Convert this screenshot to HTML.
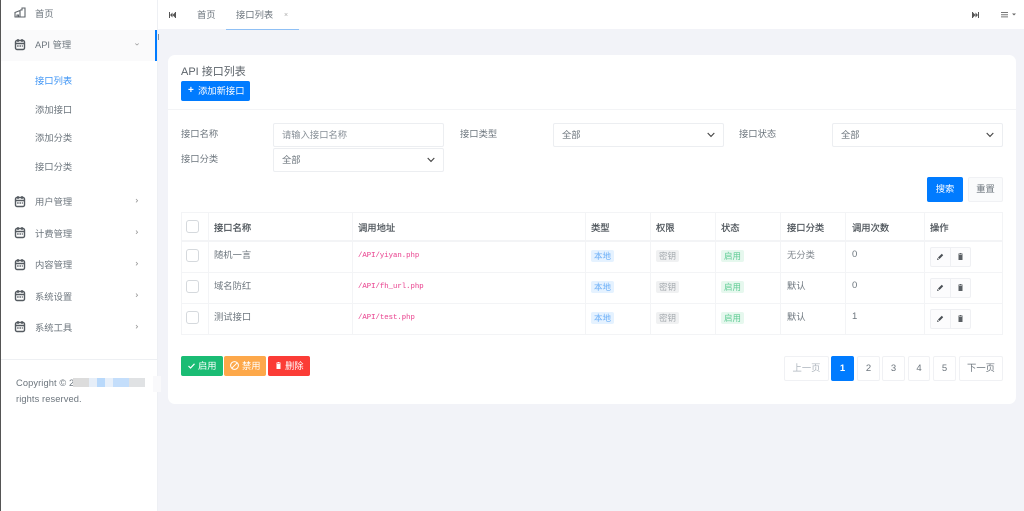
<!DOCTYPE html>
<html><head><meta charset="utf-8">
<style>
*{box-sizing:border-box}
html,body{margin:0;padding:0;width:1024px;height:511px;overflow:hidden;background:#f2f3f8}
#r{position:relative;width:1024px;height:511px;overflow:hidden;background:#f2f3f8;font-family:"Liberation Sans","Noto Sans CJK SC",sans-serif;font-size:9.3px;color:#6c757d;filter:blur(.3px)}
.a{position:absolute;white-space:nowrap}
.t{position:absolute;white-space:nowrap;line-height:12px}
.b{position:absolute;border:1px solid #eff0f3;background:#fff;border-radius:2px}
.sel{position:absolute;border:1px solid #eceef1;background:#fff;border-radius:2px;height:24px;line-height:22px;padding-left:8px;color:#6c757d;width:171px}
.v{position:absolute;background:#f3f4f6;width:1px}
.h{position:absolute;background:#f3f4f6;height:1px}
.tag{position:absolute;width:23px;height:12px;border-radius:2px;font-size:8.5px;line-height:12px;text-align:center}
.ck{position:absolute;left:186px;width:13px;height:13px;border:1px solid #d5d9dd;border-radius:3px;background:#fff}
.code{position:absolute;left:358px;font:7.3px/12px "Liberation Mono",monospace;color:#e83e8c;opacity:.9;-webkit-text-stroke:.1px #e83e8c}
.th{color:#4a5157;-webkit-text-stroke:.2px #4a5157}
.pg{position:absolute;top:356px;height:25px;border:1px solid #f0f1f4;border-radius:2px;background:#fff;text-align:center;line-height:23px;color:#6c757d;font-size:9.5px}
svg{position:absolute;overflow:visible}
</style></head><body><div id="r">
<div class="a" style="left:0;top:0;width:158px;height:511px;background:#fff;border-left:1px solid #555;border-right:1px solid #eef0f4"></div>
<div class="a" style="left:1px;top:30px;width:155px;height:31px;background:#fafafb"></div>
<div class="a" style="left:155px;top:30px;width:2px;height:31px;background:#007bff"></div>
<div class="a" style="left:158px;top:34px;width:1px;height:6px;background:#8a8f96"></div>

<svg style="left:14px;top:7px" width="12" height="11" viewBox="0 0 12 11" fill="none" stroke="#5d6369" stroke-width="1.1"><path d="M1 10V5.5L6 3.5V10M.5 10H11.5M6 3H8V1H11V10M3 10V8H4.5V10"/></svg>
<div class="t" style="left:35px;top:8px">首页</div>
<svg style="left:15px;top:39px" width="10" height="11" viewBox="0 0 10 11" fill="none" stroke="#555b61" stroke-width="1.4"><rect x=".5" y="1.5" width="9" height="9" rx="1.5"/><path d="M3 0V3M7 0V3M.5 4.5H9.5"/><path d="M2.2 7H7.8" stroke-dasharray="1.4 .9"/></svg>
<div class="t" style="left:35px;top:39px">API 管理</div>
<div class="t" style="left:35px;top:75px;color:#3f95f5">接口列表</div>
<div class="t" style="left:35px;top:104px">添加接口</div>
<div class="t" style="left:35px;top:132px">添加分类</div>
<div class="t" style="left:35px;top:161px">接口分类</div>

<svg style="left:15px;top:196px" width="10" height="11" viewBox="0 0 10 11" fill="none" stroke="#555b61" stroke-width="1.4"><rect x=".5" y="1.5" width="9" height="9" rx="1.5"/><path d="M3 0V3M7 0V3M.5 4.5H9.5"/><path d="M2.2 7H7.8" stroke-dasharray="1.4 .9"/></svg>
<div class="t" style="left:35px;top:196px">用户管理</div>
<svg style="left:15px;top:227px" width="10" height="11" viewBox="0 0 10 11" fill="none" stroke="#555b61" stroke-width="1.4"><rect x=".5" y="1.5" width="9" height="9" rx="1.5"/><path d="M3 0V3M7 0V3M.5 4.5H9.5"/><path d="M2.2 7H7.8" stroke-dasharray="1.4 .9"/></svg>
<div class="t" style="left:35px;top:228px">计费管理</div>
<svg style="left:15px;top:259px" width="10" height="11" viewBox="0 0 10 11" fill="none" stroke="#555b61" stroke-width="1.4"><rect x=".5" y="1.5" width="9" height="9" rx="1.5"/><path d="M3 0V3M7 0V3M.5 4.5H9.5"/><path d="M2.2 7H7.8" stroke-dasharray="1.4 .9"/></svg>
<div class="t" style="left:35px;top:259px">内容管理</div>
<svg style="left:15px;top:290px" width="10" height="11" viewBox="0 0 10 11" fill="none" stroke="#555b61" stroke-width="1.4"><rect x=".5" y="1.5" width="9" height="9" rx="1.5"/><path d="M3 0V3M7 0V3M.5 4.5H9.5"/><path d="M2.2 7H7.8" stroke-dasharray="1.4 .9"/></svg>
<div class="t" style="left:35px;top:291px">系统设置</div>
<svg style="left:15px;top:321px" width="10" height="11" viewBox="0 0 10 11" fill="none" stroke="#555b61" stroke-width="1.4"><rect x=".5" y="1.5" width="9" height="9" rx="1.5"/><path d="M3 0V3M7 0V3M.5 4.5H9.5"/><path d="M2.2 7H7.8" stroke-dasharray="1.4 .9"/></svg>
<div class="t" style="left:35px;top:322px">系统工具</div>
<svg style="left:135px;top:199px" width="3" height="140" viewBox="0 0 3 140" fill="none" stroke="#999" stroke-width=".8"><path d="M1 0L2.6 1.7L1 3.4M1 31.5L2.6 33.2L1 34.9M1 63L2.6 64.7L1 66.4M1 94.5L2.6 96.2L1 97.9M1 126L2.6 127.7L1 129.4"/></svg>
<svg style="left:135px;top:43px" width="4" height="3" viewBox="0 0 4 3" fill="none" stroke="#999" stroke-width=".8"><path d="M.3 .5L2 2L3.7 .5"/></svg>

<div class="a" style="left:1px;top:359px;width:156px;height:1px;background:#eef0f3"></div>
<div class="t" style="left:16px;top:377px;letter-spacing:.1px">Copyright © 2</div>
<div class="a" style="left:73px;top:378px;width:16px;height:9px;background:#dcdcdc"></div>
<div class="a" style="left:89px;top:378px;width:8px;height:9px;background:#e6eef8"></div>
<div class="a" style="left:97px;top:378px;width:8px;height:9px;background:#b9d9fb"></div>
<div class="a" style="left:105px;top:378px;width:8px;height:9px;background:#e8f0fa"></div>
<div class="a" style="left:113px;top:378px;width:16px;height:9px;background:#c4defb"></div>
<div class="a" style="left:129px;top:378px;width:16px;height:9px;background:#e0e2e4"></div>
<div class="a" style="left:153px;top:376px;width:8px;height:16px;background:#f9f9fb"></div>
<div class="t" style="left:16px;top:393px;letter-spacing:.1px">rights reserved.</div>

<div class="a" style="left:158px;top:0;width:866px;height:29px;background:#fff"></div>
<div class="a" style="left:226px;top:29px;width:73px;height:1px;background:#8fc0f5"></div>
<svg style="left:169px;top:12px" width="7" height="6" viewBox="0 0 7 6" fill="#555"><path d="M0 0H1V6H0ZM6 0H7V6H6ZM1 3L3.5 .5V5.5ZM3.5 3L6 .5V5.5Z"/></svg>
<div class="t" style="left:197px;top:9px">首页</div>
<div class="t" style="left:236px;top:9px">接口列表</div>
<div class="t" style="left:284px;top:10px;font-size:7px;color:#aaa">×</div>
<svg style="left:972px;top:12px" width="7" height="6" viewBox="0 0 7 6" fill="#555"><path d="M0 0H1V6H0ZM6 0H7V6H6ZM1 .5L3.5 3L1 5.5ZM3.5 .5L6 3L3.5 5.5Z"/></svg>
<svg style="left:1001px;top:12px" width="15" height="6" viewBox="0 0 15 6"><path d="M0 .5H7M0 2.7H7M0 4.9H7" stroke="#777" stroke-width="1"/><path d="M11 1.5H15L13 3.5Z" fill="#666"/></svg>

<div class="a" style="left:168px;top:55px;width:848px;height:349px;background:#fff;border-radius:7px"></div>
<div class="h" style="left:168px;top:109px;width:848px;background:#f3f4f6"></div>
<div class="t" style="left:181px;top:66px;font-size:11px;line-height:13px;color:#5c636a">API 接口列表</div>
<div class="a" style="left:181px;top:81px;width:69px;height:20px;background:#007bff;border-radius:2px;color:#fff;line-height:20px"><span style="position:absolute;left:7px;font-weight:bold;font-size:10px">+</span><span style="position:absolute;left:17px">添加新接口</span></div>

<div class="t" style="left:181px;top:128px">接口名称</div>
<div class="t" style="left:181px;top:153px">接口分类</div>
<div class="t" style="left:460px;top:128px">接口类型</div>
<div class="t" style="left:739px;top:128px">接口状态</div>
<div class="sel" style="left:273px;top:123px;color:#868e96">请输入接口名称</div>
<div class="sel" style="left:273px;top:148px">全部</div>
<div class="sel" style="left:553px;top:123px">全部</div>
<div class="sel" style="left:832px;top:123px">全部</div>
<svg style="left:427px;top:157px" width="8" height="6" viewBox="0 0 8 6" fill="none" stroke="#444" stroke-width="1.1"><path d="M.7 1L4 4.4L7.3 1"/></svg>
<svg style="left:707px;top:132px" width="8" height="6" viewBox="0 0 8 6" fill="none" stroke="#444" stroke-width="1.1"><path d="M.7 1L4 4.4L7.3 1"/></svg>
<svg style="left:986px;top:132px" width="8" height="6" viewBox="0 0 8 6" fill="none" stroke="#444" stroke-width="1.1"><path d="M.7 1L4 4.4L7.3 1"/></svg>

<div class="a" style="left:927px;top:177px;width:36px;height:25px;background:#007bff;border-radius:2px;color:#fff;line-height:25px;text-align:center">搜索</div>
<div class="a" style="left:968px;top:177px;width:35px;height:25px;background:#fafbfc;border:1px solid #f0f1f4;border-radius:2px;line-height:23px;text-align:center">重置</div>

<!-- table -->
<div class="h" style="left:181px;top:212px;width:822px"></div>
<div class="h" style="left:181px;top:240px;width:822px;height:2px"></div>
<div class="h" style="left:181px;top:272px;width:822px"></div>
<div class="h" style="left:181px;top:303px;width:822px"></div>
<div class="h" style="left:181px;top:334px;width:822px"></div>
<div class="v" style="left:181px;top:212px;height:123px"></div>
<div class="v" style="left:208px;top:212px;height:123px"></div>
<div class="v" style="left:352px;top:212px;height:123px"></div>
<div class="v" style="left:585px;top:212px;height:123px"></div>
<div class="v" style="left:650px;top:212px;height:123px"></div>
<div class="v" style="left:715px;top:212px;height:123px"></div>
<div class="v" style="left:780px;top:212px;height:123px"></div>
<div class="v" style="left:845px;top:212px;height:123px"></div>
<div class="v" style="left:924px;top:212px;height:123px"></div>
<div class="v" style="left:1002px;top:212px;height:123px"></div>

<div class="ck" style="top:220px"></div>
<div class="ck" style="top:249px"></div>
<div class="ck" style="top:280px"></div>
<div class="ck" style="top:311px"></div>

<div class="t th" style="left:214px;top:222px">接口名称</div>
<div class="t th" style="left:358px;top:222px">调用地址</div>
<div class="t th" style="left:591px;top:222px">类型</div>
<div class="t th" style="left:656px;top:222px">权限</div>
<div class="t th" style="left:721px;top:222px">状态</div>
<div class="t th" style="left:787px;top:222px">接口分类</div>
<div class="t th" style="left:852px;top:222px">调用次数</div>
<div class="t th" style="left:930px;top:222px">操作</div>

<div class="t" style="left:214px;top:249px">随机一言</div>
<div class="t" style="left:214px;top:280px">域名防红</div>
<div class="t" style="left:214px;top:311px">测试接口</div>
<div class="code" style="top:250px">/API/yiyan.php</div>
<div class="code" style="top:281px">/API/fh_url.php</div>
<div class="code" style="top:312px">/API/test.php</div>

<div class="tag" style="left:591px;top:250px;background:#e5f2ff;color:#6aaef7">本地</div>
<div class="tag" style="left:591px;top:281px;background:#e5f2ff;color:#6aaef7">本地</div>
<div class="tag" style="left:591px;top:312px;background:#e5f2ff;color:#6aaef7">本地</div>
<div class="tag" style="left:656px;top:250px;background:#f0f1f2;color:#a3a9ae">密钥</div>
<div class="tag" style="left:656px;top:281px;background:#f0f1f2;color:#a3a9ae">密钥</div>
<div class="tag" style="left:656px;top:312px;background:#f0f1f2;color:#a3a9ae">密钥</div>
<div class="tag" style="left:721px;top:250px;background:#e6f8ee;color:#5fcb94">启用</div>
<div class="tag" style="left:721px;top:281px;background:#e6f8ee;color:#5fcb94">启用</div>
<div class="tag" style="left:721px;top:312px;background:#e6f8ee;color:#5fcb94">启用</div>

<div class="t" style="left:787px;top:249px;color:#80878e">无分类</div>
<div class="t" style="left:787px;top:280px">默认</div>
<div class="t" style="left:787px;top:311px">默认</div>
<div class="t" style="left:852px;top:249px;font-size:9.5px">0</div>
<div class="t" style="left:852px;top:280px;font-size:9.5px">0</div>
<div class="t" style="left:852px;top:311px;font-size:9.5px">1</div>

<div class="b" style="left:930px;top:247px;width:21px;height:20px;background:#fcfcfd;border-radius:2px 0 0 2px"></div>
<div class="b" style="left:950px;top:247px;width:21px;height:20px;background:#fcfcfd;border-radius:0 2px 2px 0"></div>
<div class="b" style="left:930px;top:278px;width:21px;height:20px;background:#fcfcfd;border-radius:2px 0 0 2px"></div>
<div class="b" style="left:950px;top:278px;width:21px;height:20px;background:#fcfcfd;border-radius:0 2px 2px 0"></div>
<div class="b" style="left:930px;top:309px;width:21px;height:20px;background:#fcfcfd;border-radius:2px 0 0 2px"></div>
<div class="b" style="left:950px;top:309px;width:21px;height:20px;background:#fcfcfd;border-radius:0 2px 2px 0"></div>
<svg style="left:937px;top:253px" width="7" height="7" viewBox="0 0 7 7" fill="#4a4f54"><path d="M0 7L.5 5L2 6.5ZM1 4.5L4.8 .8L6.2 2.2L2.5 6Z"/></svg>
<svg style="left:937px;top:284px" width="7" height="7" viewBox="0 0 7 7" fill="#4a4f54"><path d="M0 7L.5 5L2 6.5ZM1 4.5L4.8 .8L6.2 2.2L2.5 6Z"/></svg>
<svg style="left:937px;top:315px" width="7" height="7" viewBox="0 0 7 7" fill="#4a4f54"><path d="M0 7L.5 5L2 6.5ZM1 4.5L4.8 .8L6.2 2.2L2.5 6Z"/></svg>
<svg style="left:958px;top:253px" width="5" height="7" viewBox="0 0 5 7" fill="#5a5f64"><path d="M0 .7H1.5V0H3.5V.7H5V1.5H0ZM.5 2H4.5V7H.5Z"/></svg>
<svg style="left:958px;top:284px" width="5" height="7" viewBox="0 0 5 7" fill="#5a5f64"><path d="M0 .7H1.5V0H3.5V.7H5V1.5H0ZM.5 2H4.5V7H.5Z"/></svg>
<svg style="left:958px;top:315px" width="5" height="7" viewBox="0 0 5 7" fill="#5a5f64"><path d="M0 .7H1.5V0H3.5V.7H5V1.5H0ZM.5 2H4.5V7H.5Z"/></svg>

<!-- action buttons -->
<div class="a" style="left:181px;top:356px;width:42px;height:20px;background:#1abc74;border-radius:2px;color:#fff;line-height:20px;padding-left:17px">启用</div>
<svg style="left:188px;top:363px" width="7" height="6" viewBox="0 0 7 6" fill="none" stroke="#fff" stroke-width="1.2"><path d="M.5 3L2.5 5L6.5 .8"/></svg>
<div class="a" style="left:224px;top:356px;width:42px;height:20px;background:#fda84a;border-radius:2px;color:#fff;line-height:20px;padding-left:18px">禁用</div>
<svg style="left:230px;top:361px" width="9" height="9" viewBox="0 0 9 9" fill="none" stroke="#fff" stroke-width="1"><circle cx="4.5" cy="4.5" r="3.9"/><path d="M1.8 7.2L7.2 1.8"/></svg>
<div class="a" style="left:268px;top:356px;width:42px;height:20px;background:#fb3c36;border-radius:2px;color:#fff;line-height:20px;padding-left:17px">删除</div>
<svg style="left:276px;top:362px" width="5" height="7" viewBox="0 0 5 7" fill="#fff"><path d="M0 .7H1.5V0H3.5V.7H5V1.5H0ZM.5 2H4.5V7H.5Z"/></svg>

<!-- pagination -->
<div class="pg" style="left:784px;width:45px;color:#adb5bd;font-size:9.3px">上一页</div>
<div class="pg" style="left:831px;width:23px;background:#007bff;border-color:#007bff;color:#fff;font-weight:bold">1</div>
<div class="pg" style="left:857px;width:23px">2</div>
<div class="pg" style="left:882px;width:23px">3</div>
<div class="pg" style="left:908px;width:22px">4</div>
<div class="pg" style="left:933px;width:23px">5</div>
<div class="pg" style="left:959px;width:44px;font-size:9.3px">下一页</div>
</div></body></html>
